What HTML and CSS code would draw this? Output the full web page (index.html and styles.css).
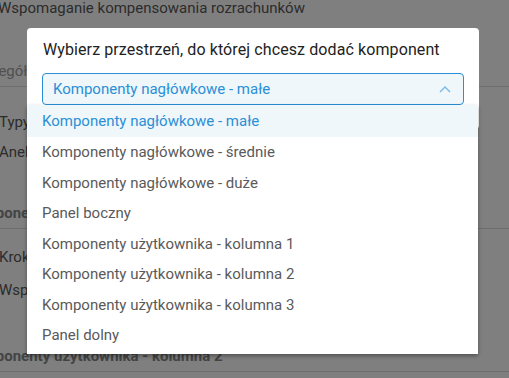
FILE: index.html
```html
<!DOCTYPE html>
<html>
  <head>
    <title>Wybierz przestrzeń</title>
    <link rel="stylesheet" href="styles.css">
  </head>

  <body>
    <div class="page">
      <div class="crumb">Wspomaganie kompensowania rozrachunków</div>
      <div class="tab">Szczegóły</div>
      <div class="item first">Typy</div>
      <div class="item">Aneks</div>
      <div class="section gap">Komponenty nagłówkowe - małe</div>
      <div class="item after">Kroki</div>
      <div class="item near">Wspomaganie</div>
      <div class="section far">Komponenty użytkownika - kolumna 2</div>
    </div>

    <div class="overlay"></div>

    <!-- Dialog with the open select -->
    <div class="dialog">
      <h2 class="title">Wybierz przestrzeń, do której chcesz dodać komponent</h2>
      <div class="select">
        <span>Komponenty nagłówkowe - małe</span>
        <svg width="12" height="7" viewBox="0 0 12 7">
          <polyline points="1,6 6,1 11,6" fill="none" stroke="#74b9e8" stroke-width="1.4" />
        </svg>
      </div>
      <ul class="options">
        <li class="active">Komponenty nagłówkowe - małe</li>
        <li>Komponenty nagłówkowe - średnie</li>
        <li>Komponenty nagłówkowe - duże</li>
        <li>Panel boczny</li>
        <li>Komponenty użytkownika - kolumna 1</li>
        <li>Komponenty użytkownika - kolumna 2</li>
        <li>Komponenty użytkownika - kolumna 3</li>
        <li>Panel dolny</li>
      </ul>
    </div>
  </body>
</html>
```

FILE: styles.css
```css
body {
  font-family: Roboto, "Liberation Sans", sans-serif;
  background-color: #fff;
  margin: 0;
  padding: 0;
  overflow: hidden;
}

.page {
  margin-left: -33px;
  color: #585858;
  font-size: 15px;
}

.crumb {
  line-height: 16px;
  padding-left: 31px;
}

.tab {
  margin-top: 40px;
  line-height: 30px;
  color: #a0a0a0;
  border-bottom: 1px solid #dcdcdc;
}

.item {
  line-height: 30px;
  padding-left: 32px;
}

.item.first {
  margin-top: 20px;
}

.item.after {
  margin-top: 13px;
}

.item.near {
  margin-top: 3px;
}

.section {
  line-height: 30px;
  font-weight: bold;
  color: #888;
  margin-left: -2px;
  border-bottom: 1px solid #dcdcdc;
}

.section.gap {
  margin-top: 31px;
}

.section.far {
  margin-top: 36px;
}

.overlay {
  position: absolute;
  top: 0;
  left: 0;
  right: 0;
  bottom: 0;
  background-color: rgba(0, 0, 0, 0.5);
}

.dialog {
  position: absolute;
  top: 28px;
  left: 27px;
  width: 452px;
  background-color: #fff;
  border-radius: 4px;
  padding: 12px 0 24px;
  box-sizing: border-box;
}

.title {
  margin: 0 16px;
  font-size: 16px;
  letter-spacing: 0.1px;
  font-weight: normal;
  line-height: 20px;
  color: #222;
}

.select {
  margin: 13px 15px 0;
  height: 32px;
  box-sizing: border-box;
  border: 1px solid #2a8fd6;
  border-radius: 4px;
  background-color: #eff7fb;
  display: flex;
  align-items: center;
  justify-content: space-between;
  padding: 0 12px 0 10px;
  color: #2a8fd6;
  font-size: 15px;
}

.options {
  position: absolute;
  top: 77px;
  left: 0;
  width: 451px;
  margin: 0;
  padding: 0 0 3px;
  list-style: none;
  background-color: #fff;
  box-shadow: 0 2px 4px rgba(0, 0, 0, 0.35);
}

.options li {
  line-height: 30.5px;
  padding-left: 15px;
  font-size: 15px;
  color: #5a5a5a;
}

.options li.active {
  line-height: 32px;
  background-color: #eff7fb;
  color: #2a8fd6;
}
```
